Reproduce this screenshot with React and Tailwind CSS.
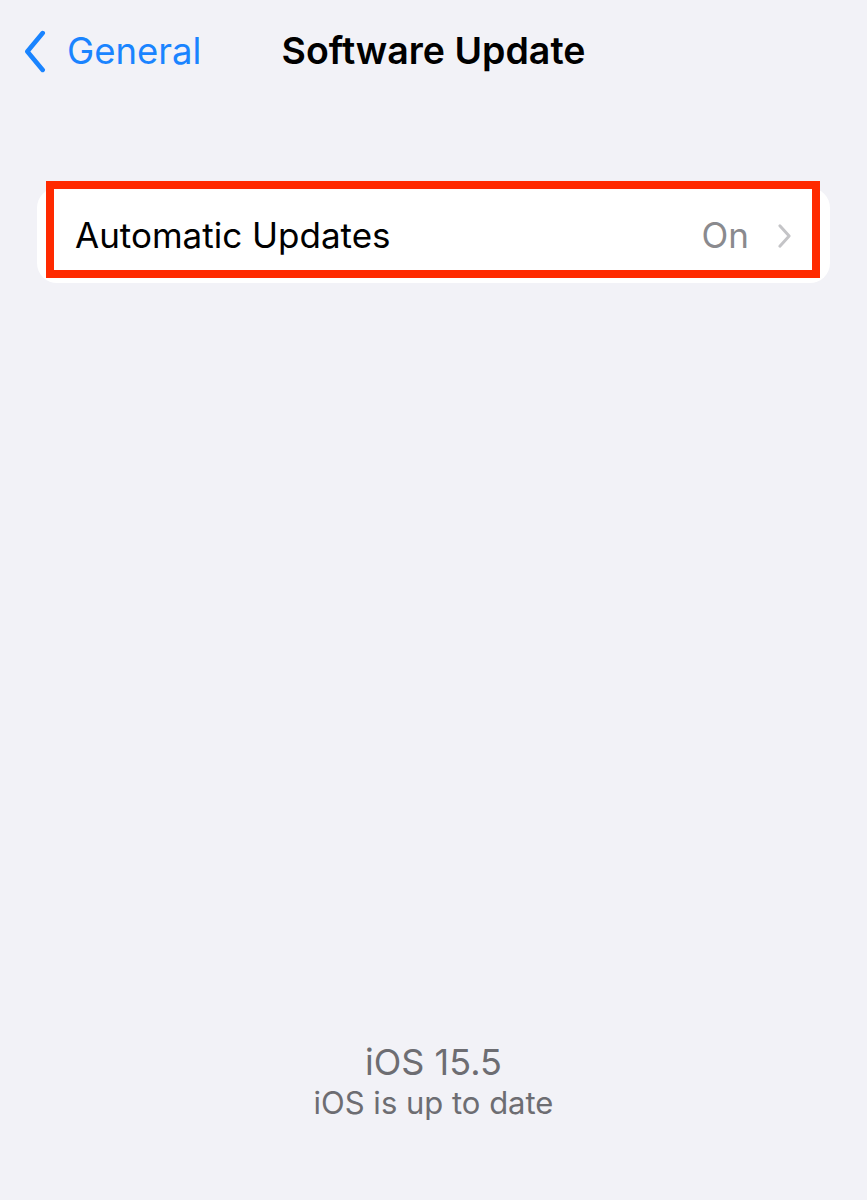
import React from 'react'

const Chevron = ({ className }) => (
  <svg viewBox="0 0 24 42" className={className} fill="none">
    <path d="M20 3 L5 21 L20 39" stroke="currentColor" strokeWidth="4.5" strokeLinecap="round" strokeLinejoin="round" />
  </svg>
)

const App = () => {
  return (
    <div className="min-h-[1200px] w-full bg-[#f2f2f7] flex flex-col" style={{ fontFamily: 'Inter, "Liberation Sans", sans-serif' }}>
      {/* nav bar */}
      <div className="relative h-[102px] flex items-center">
        <div className="flex items-center pl-[22px] text-[#1a84ff]">
          <Chevron className="w-[25px] h-[43px]" />
          <span className="ml-[20px] text-[36.5px]">General</span>
        </div>
        <div className="absolute inset-0 flex items-center justify-center pointer-events-none">
          <span className="text-[37.5px] font-semibold text-black">Software Update</span>
        </div>
      </div>

      {/* card */}
      <div className="mt-[86px] mx-[37px] relative">
        <div className="bg-white rounded-[20px] h-[95px] flex items-center pl-[38px] pr-[38px]">
          <span className="text-[35px] text-black flex-1">Automatic Updates</span>
          <span className="text-[35px] text-[#8a8a8e]">On</span>
          <svg viewBox="0 0 16 28" className="w-[15px] h-[26px] ml-[28px] text-[#c4c4c7]" fill="none">
            <path d="M3 3 L13 14 L3 25" stroke="currentColor" strokeWidth="3.2" strokeLinecap="round" strokeLinejoin="round" />
          </svg>
        </div>
        <div className="absolute left-[9px] right-[10px] top-[-7px] bottom-[5px] border-[8px] border-[#ff2a00] pointer-events-none" />
      </div>

      {/* footer */}
      <div className="mt-auto pb-[78px] flex flex-col items-center text-[#6d6d72]">
        <span className="text-[36px] leading-[44px]">iOS 15.5</span>
        <span className="text-[31px] leading-[38px]">iOS is up to date</span>
      </div>
    </div>
  )
}

export default App
